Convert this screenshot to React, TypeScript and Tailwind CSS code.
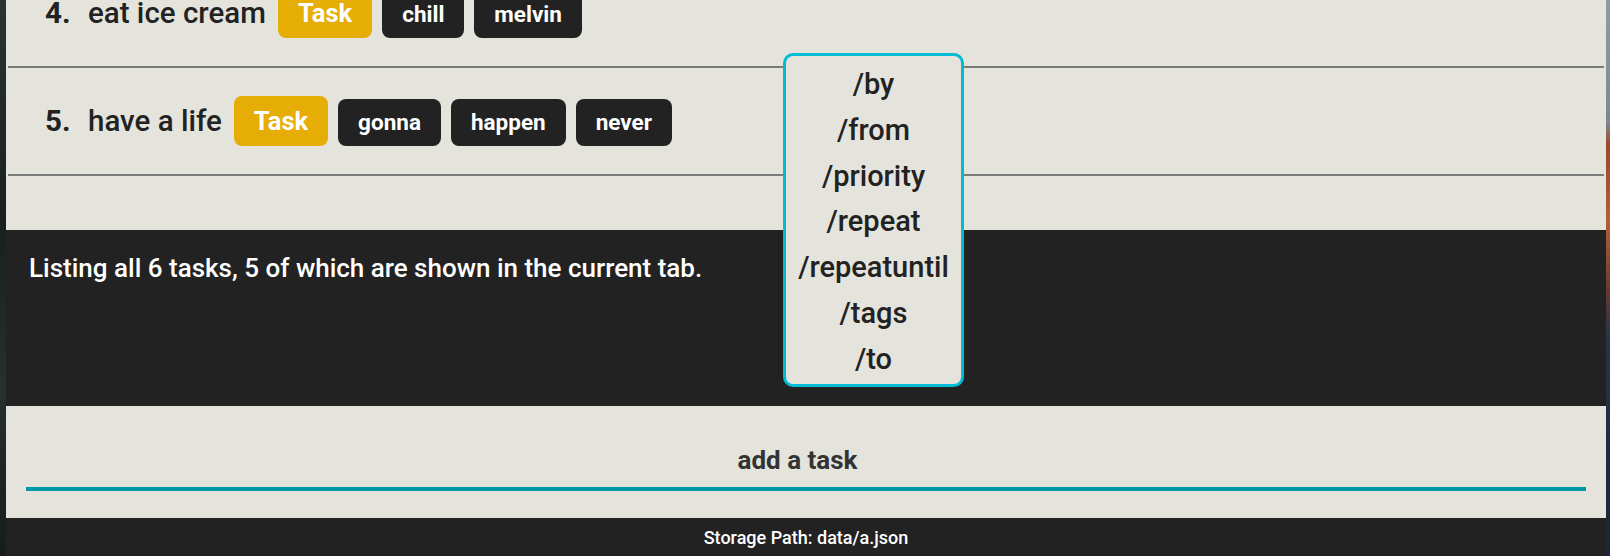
const rows = [
  { index: 4, title: "eat ice cream", tags: ["chill", "melvin"] },
  { index: 5, title: "have a life", tags: ["gonna", "happen", "never"] },
];

const prefixes = ["/by", "/from", "/priority", "/repeat", "/repeatuntil", "/tags", "/to"];

function TaskRow({ index, title, tags }: { index: number; title: string; tags: string[] }) {
  return (
    <div className="mx-[2px] flex h-[108px] items-center border-b-2 border-[#7a7a7a] pl-[37px]">
      <span className="w-[43px] text-[29.5px] font-bold text-[#222]">{index}.</span>
      <span className="text-[29.5px] font-medium text-[#222]">{title}</span>
      <div className="ml-[12px] flex items-end gap-[10px]">
        <span className="flex h-[50px] items-center rounded-[8px] bg-[#e6ad06] px-[20px] text-[25.5px] font-bold text-white">
          Task
        </span>
        {tags.map((tag) => (
          <span
            key={tag}
            className="flex h-[47px] items-center rounded-[8px] bg-[#222] px-[20px] text-[22.5px] font-bold text-white"
          >
            {tag}
          </span>
        ))}
      </div>
    </div>
  );
}

export default function App() {
  return (
    <div className="flex h-[556px] w-[1610px] overflow-hidden bg-[#1c2420] font-['Roboto',sans-serif]">
      {/* desktop edges */}
      <div className="w-[6px] bg-[linear-gradient(to_bottom,#2a3430,#18201d_40%,#26302c_70%,#161c1a)]" />

      <div className="relative flex w-[1600px] flex-col">
        {/* task list */}
        <section className="h-[230px] overflow-hidden bg-[#e4e4dc]">
          <div className="-mt-[40px]">
            {rows.map((row) => (
              <TaskRow key={row.index} {...row} />
            ))}
          </div>
        </section>

        {/* result display */}
        <section className="h-[176px] bg-[#222] pl-[23px] pt-[19px]">
          <p className="text-[26px] font-medium text-white">
            Listing all 6 tasks, 5 of which are shown in the current tab.
          </p>
        </section>

        {/* command box */}
        <section className="h-[112px] bg-[#e4e4dc] px-[20px] pt-[35px]">
          <div className="border-b-4 border-[#0097a7] pb-[7px] pr-[17px] text-center text-[26px] font-bold text-[#333]">
            add a task
          </div>
        </section>

        {/* status bar */}
        <footer className="flex-1 bg-[#222] pt-[6px] text-center text-[18px] font-medium text-white">
          Storage Path: data/a.json
        </footer>

        {/* autocomplete popup */}
        <div className="absolute left-[777px] top-[53px] flex h-[334px] w-[181px] flex-col items-center rounded-[10px] border-[3px] border-[#00bcd4] bg-[#e4e4dc] pt-[6px]">
          {prefixes.map((p) => (
            <span key={p} className="text-[29px] font-medium leading-[45.8px] text-[#222]">
              {p}
            </span>
          ))}
        </div>
      </div>

      <div className="w-[4px] bg-[linear-gradient(to_bottom,#8e9aa6_0%,#7c8894_22%,#9a4a2a_26%,#b0603a_40%,#6a3a30_52%,#2a3448_60%,#1c2436_100%)]" />
    </div>
  );
}
